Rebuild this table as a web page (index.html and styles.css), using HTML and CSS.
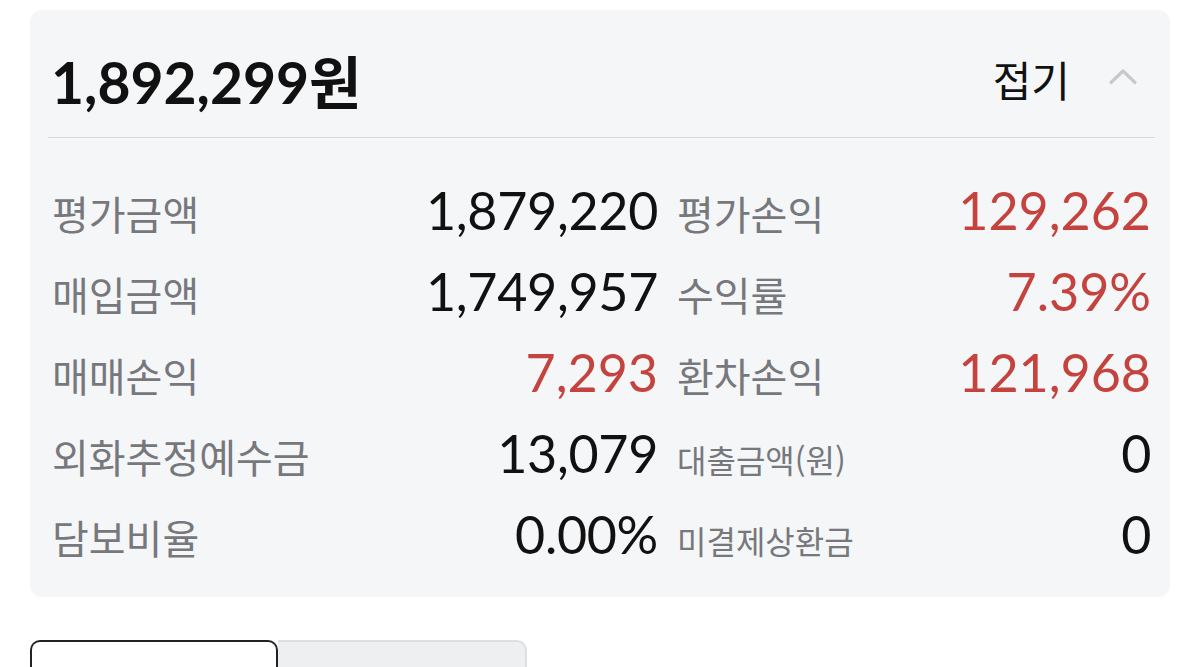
FILE: index.html
```html
<!DOCTYPE html>
<html lang="ko">
<head>
<meta charset="utf-8">
<link rel="stylesheet" href="styles.css">
</head>
<body>
<section class="card">
  <header class="card-head">
    <h1 class="total">1,892,299<span class="won">원</span></h1>
    <button class="fold" type="button">
      <span class="fold-text">접기</span>
      <svg class="caret" width="30" height="18" viewBox="0 0 30 18" aria-hidden="true">
        <path d="M3 15.5 L15 4 L27 15.5" fill="none" stroke="#c9c9cb" stroke-width="3.2" stroke-linecap="round" stroke-linejoin="round"/>
      </svg>
    </button>
  </header>
  <div class="grid">
    <div class="row">
      <div class="pair"><span class="label">평가금액</span><span class="value">1,879,220</span></div>
      <div class="pair"><span class="label">평가손익</span><span class="value red">129,262</span></div>
    </div>
    <div class="row">
      <div class="pair"><span class="label">매입금액</span><span class="value">1,749,957</span></div>
      <div class="pair"><span class="label">수익률</span><span class="value red">7.39%</span></div>
    </div>
    <div class="row">
      <div class="pair"><span class="label">매매손익</span><span class="value red">7,293</span></div>
      <div class="pair"><span class="label">환차손익</span><span class="value red">121,968</span></div>
    </div>
    <div class="row">
      <div class="pair"><span class="label">외화추정예수금</span><span class="value">13,079</span></div>
      <div class="pair"><span class="label small">대출금액(원)</span><span class="value">0</span></div>
    </div>
    <div class="row">
      <div class="pair"><span class="label">담보비율</span><span class="value">0.00%</span></div>
      <div class="pair"><span class="label small">미결제상환금</span><span class="value">0</span></div>
    </div>
  </div>
</section>
<nav class="tabs">
  <div class="tab active"></div>
  <div class="tab"></div>
</nav>
</body>
</html>
```

FILE: styles.css
```css
* { box-sizing: border-box; }
html, body { margin: 0; padding: 0; background: #ffffff; }
body {
  font-family: "Lato", "Noto Sans CJK KR", sans-serif;
  color: #111111;
  overflow: hidden;
}
.card {
  margin: 10px 0 0 30px;
  width: 1140px;
  height: 587px;
  background: #f5f6f8;
  border-radius: 12px;
  padding: 0 15px 0 18px;
}
.card-head {
  height: 128px;
  padding-top: 11px;
  border-bottom: 1px solid #d9dadc;
  display: flex;
  align-items: center;
  justify-content: space-between;
}
.total {
  margin: 0 0 0 3px;
  font-family: "Lato", "Noto Sans CJK KR", sans-serif;
  font-weight: 700;
  font-size: 57px;
  color: #111111;
}
.won { font-family: "Noto Sans CJK KR", sans-serif; font-weight: 700; }
.fold {
  border: 0;
  background: transparent;
  padding: 0;
  margin-right: 17px;
  display: flex;
  align-items: center;
  gap: 38px;
  font-family: "Noto Sans CJK KR", sans-serif;
  color: #111111;
}
.fold-text { font-size: 42px; line-height: 1.2; }
.caret { display: block; margin-top: -6px; }
.grid {
  padding: 32px 4px 0 4px;
}
.row {
  display: grid;
  grid-template-columns: 606px 1fr;
  column-gap: 19px;
  height: 81px;
  align-items: center;
}
.pair {
  display: flex;
  justify-content: space-between;
  align-items: baseline;
}
.label {
  font-family: "Noto Sans CJK KR", sans-serif;
  font-size: 40px;
  line-height: 1.2;
  color: #77787c;
}
.label.small { font-size: 32px; }
.value {
  font-family: "Lato", sans-serif;
  font-size: 52px;
  line-height: 1.2;
  color: #111111;
  letter-spacing: -0.3px;
}
.value.red { color: #c4433f; letter-spacing: 0; }
.tabs {
  display: flex;
  margin: 43px 0 0 30px;
}
.tab {
  width: 249px;
  height: 60px;
  background: #eeeff1;
  border: 2px solid #dedfe1;
  border-bottom: 0;
  border-left: 0;
  border-radius: 0 10px 0 0;
}
.tab.active {
  width: 248px;
  background: #ffffff;
  border: 2px solid #222222;
  border-bottom: 0;
  border-radius: 10px 10px 0 0;
}
```
